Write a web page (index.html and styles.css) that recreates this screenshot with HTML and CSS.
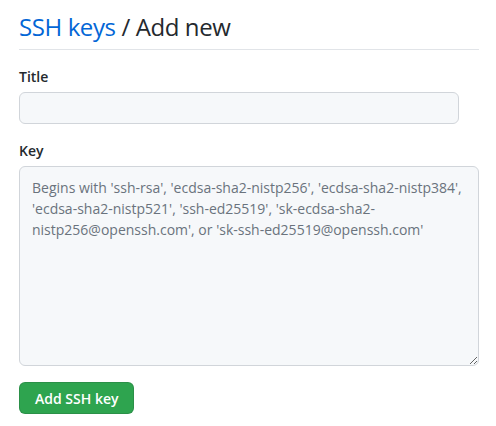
FILE: index.html
```html
<!DOCTYPE html>
<html>
<head>
<meta charset="utf-8">
<link rel="stylesheet" href="styles.css">
</head>
<body>
<div class="page">
  <div class="subhead">
    <h2 class="subhead-heading"><a class="crumb" href="#">SSH keys</a> / Add new</h2>
  </div>
  <form class="form">
    <div class="form-group">
      <label class="label">Title</label>
      <input class="input input-title" type="text">
    </div>
    <div class="form-group">
      <label class="label">Key</label>
      <textarea class="input textarea" placeholder="Begins with 'ssh-rsa', 'ecdsa-sha2-nistp256', 'ecdsa-sha2-nistp384', 'ecdsa-sha2-nistp521', 'ssh-ed25519', 'sk-ecdsa-sha2-nistp256@openssh.com', or 'sk-ssh-ed25519@openssh.com'"></textarea>
    </div>
    <div class="actions">
      <button class="btn-primary" type="button">Add SSH key</button>
    </div>
  </form>
</div>
</body>
</html>
```
FILE: styles.css
```css
html, body {
  margin: 0;
  padding: 0;
  background: #ffffff;
}
body {
  font-family: "Open Sans", "Noto Sans", sans-serif;
  color: #24292e;
  font-size: 14px;
}
.page {
  padding: 0 17px 0 19px;
}
.subhead {
  padding-top: 12px;
  padding-bottom: 7px;
  border-bottom: 1px solid #e1e4e8;
}
.subhead-heading {
  margin: 0;
  font-size: 24px;
  font-weight: 400;
  line-height: 30px;
  letter-spacing: -0.4px;
}
.crumb {
  color: #0366d6;
  text-decoration: none;
}
.form {
  display: flex;
  flex-direction: column;
}
.form-group {
  display: flex;
  flex-direction: column;
  margin-top: 16px;
}
.label {
  font-weight: 600;
  font-size: 14px;
  line-height: 21px;
  margin-bottom: 5px;
}
.input {
  box-sizing: border-box;
  background: #f6f8fa;
  border: 1px solid #d1d5da;
  border-radius: 6px;
  font-family: inherit;
  font-size: 14px;
  color: #24292e;
  outline: none;
}
.input-title {
  width: 440px;
  height: 32px;
  padding: 5px 12px;
}
.textarea {
  width: 100%;
  height: 200px;
  padding: 10px 12px 8px;
  line-height: 21px;
  resize: vertical;
}
.textarea::placeholder {
  color: #6a737d;
}
.actions {
  margin-top: 16px;
}
.btn-primary {
  font-family: inherit;
  font-size: 14px;
  font-weight: 600;
  color: #ffffff;
  background: #2ea44f;
  border: 1px solid rgba(27, 31, 35, 0.15);
  border-radius: 6px;
  height: 32px;
  padding: 0 15px;
  white-space: nowrap;
}
```
